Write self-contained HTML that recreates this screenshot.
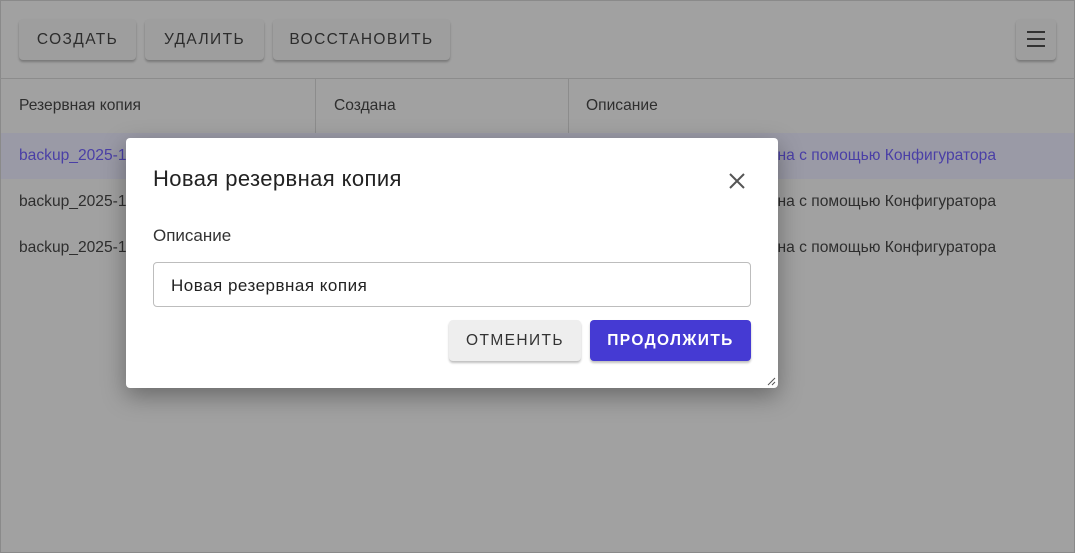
<!DOCTYPE html>
<html><head><meta charset="utf-8"><style>
*{box-sizing:border-box;margin:0;padding:0}
body{width:1075px;height:553px;overflow:hidden;background:#a1a1a1;font-family:"Liberation Sans",Roboto,sans-serif;position:relative}
.frame{position:absolute;left:0;top:0;width:1075px;height:553px;border:1px solid #8a8a8a}
.btn{position:absolute;top:19px;height:41px;background:#9e9e9e;border-radius:4px;box-shadow:0 2px 2px rgba(0,0,0,.25);color:#2c2c2c;font-size:15.5px;letter-spacing:1.4px;line-height:41px;text-align:center;font-weight:500}
.hline{position:absolute;left:0;width:1075px;height:1px;background:#8c8c8c}
.vline{position:absolute;top:79px;height:54px;width:1px;background:#8c8c8c}
.t{position:absolute;font-size:15.6px;color:#2e2e2e;white-space:nowrap}
.r{right:79px}
.p{color:#4a3fa6}
.dlg{position:absolute;left:126px;top:138px;width:652px;height:250px;background:#fff;border-radius:4px;box-shadow:0 8px 24px rgba(0,0,0,.35)}
</style></head><body>
<div class="frame"></div>
<div class="btn" style="left:19px;width:117px">СОЗДАТЬ</div>
<div class="btn" style="left:145px;width:119px">УДАЛИТЬ</div>
<div class="btn" style="left:273px;width:177px">ВОССТАНОВИТЬ</div>
<div class="btn" style="left:1016px;width:40px;padding-top:11px">
<svg width="18" height="18" viewBox="0 0 18 18" style="display:block;margin:0 auto"><path d="M0 2h18M0 9h18M0 16h18" stroke="#333" stroke-width="2"/></svg></div>
<div class="hline" style="top:78px"></div>
<div class="vline" style="left:315px"></div>
<div class="vline" style="left:568px"></div>
<div class="t" style="left:19px;top:97px">Резервная копия</div>
<div class="t" style="left:334px;top:97px">Создана</div>
<div class="t" style="left:586px;top:97px">Описание</div>
<div style="position:absolute;left:1px;top:133px;width:1073px;height:46px;background:#9a9aa6"></div>
<div class="t p" style="left:19px;top:147px">backup_2025-1</div>
<div class="t p r" style="top:147px">Создана с помощью Конфигуратора</div>
<div class="t" style="left:19px;top:193px">backup_2025-1</div>
<div class="t r" style="top:193px">Создана с помощью Конфигуратора</div>
<div class="t" style="left:19px;top:239px">backup_2025-1</div>
<div class="t r" style="top:239px">Создана с помощью Конфигуратора</div>
<div class="dlg">
<div style="position:absolute;left:27px;top:28px;font-size:22px;letter-spacing:0.4px;color:#222">Новая резервная копия</div>
<svg style="position:absolute;left:603px;top:35px" width="16" height="16" viewBox="0 0 16 16"><path d="M1 1L15 15M15 1L1 15" stroke="#555" stroke-width="2"/></svg>
<div style="position:absolute;left:27px;top:88px;font-size:17px;color:#333">Описание</div>
<div style="position:absolute;left:27px;top:124px;width:598px;height:45px;border:1px solid #bdbdbd;border-radius:4px;font-size:17px;letter-spacing:0.5px;color:#222;padding:13px 0 0 17px">Новая резервная копия</div>
<div style="position:absolute;left:323px;top:182px;width:132px;height:41px;background:#eee;border-radius:4px;box-shadow:0 2px 2px rgba(0,0,0,.25);font-size:15.5px;letter-spacing:1.4px;line-height:41px;text-align:center;color:#333;font-weight:500">ОТМЕНИТЬ</div>
<div style="position:absolute;left:464px;top:182px;width:161px;height:41px;background:#453ad3;border-radius:4px;box-shadow:0 2px 2px rgba(0,0,0,.25);font-size:15.5px;letter-spacing:1.4px;line-height:41px;text-align:center;color:#fff;font-weight:bold">ПРОДОЛЖИТЬ</div>
<svg style="position:absolute;right:2px;bottom:2px" width="9" height="9" viewBox="0 0 9 9"><path d="M1 8L8 1M5 8L8 5" stroke="#555" stroke-width="1"/></svg>
</div>
</body></html>
